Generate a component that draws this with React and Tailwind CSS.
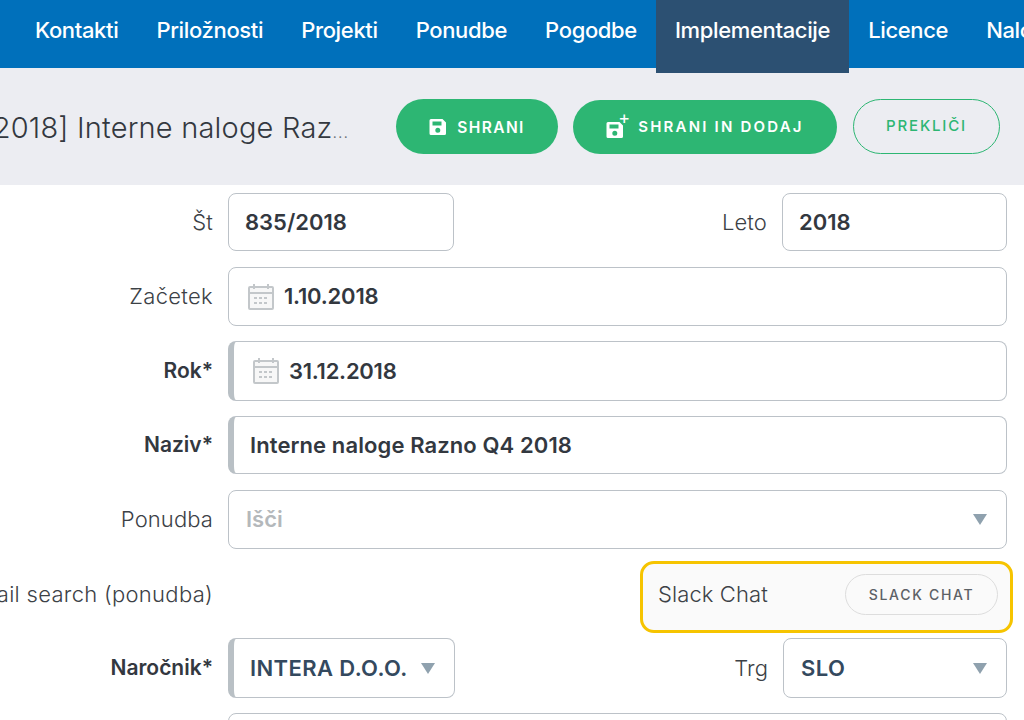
const F = "font-['Inter','Open_Sans',sans-serif]";

function Save({ className }) {
  return (
    <svg viewBox="0 0 18 18" className={className} aria-hidden="true">
      <path fillRule="evenodd" fill="#fff" d="M2 1h11.500L17 4.500V15.500A1.500 1.500 0 0 1 15.500 17H2A1.500 1.500 0 0 1 .5 15.500V2.500A1.500 1.500 0 0 1 2 1ZM3.500 3.500V7.500H12.500V3.500ZM8.800 9.800A2.500 2.500 0 1 0 8.800 14.800A2.500 2.500 0 1 0 8.800 9.800Z" />
    </svg>
  );
}

function Cal() {
  return (
    <svg viewBox="0 0 28 28" className="h-7 w-7 shrink-0" fill="none" stroke="#c3c7ca" strokeWidth="2" aria-hidden="true">
      <rect x="2" y="4" width="24" height="22" rx="1" fill="#f7f7f7" />
      <path d="M2 10H26M7 1V6M21 1V6" />
      <path d="M7 15H21M7 20H21" strokeDasharray="3 2" />
    </svg>
  );
}

function Arrow() {
  return (
    <svg viewBox="0 0 14 11" className="h-[11px] w-[14px] shrink-0" aria-hidden="true">
      <path d="M0 0H14L7 11Z" fill="#8fa1ae" />
    </svg>
  );
}

function Label({ children, strong, className = "" }) {
  return (
    <div className={`flex w-[213px] shrink-0 justify-end whitespace-nowrap ${strong ? "text-[21px] font-semibold text-[#33383f]" : "text-[22px] font-light tracking-[0.1px] text-[#3c4146]"} ${className}`}>
      {children}
    </div>
  );
}

function Box({ children, required, className = "" }) {
  return (
    <div className={`flex h-full items-center rounded-lg border border-[#bcc2c8] bg-white text-[22px] font-semibold text-[#33383f] ${required ? "border-l-[6px] border-l-[#b9c0c5]" : ""} ${className}`}>
      {children}
    </div>
  );
}

export default function App() {
  const nav = ["Kontakti", "Priložnosti", "Projekti", "Ponudbe", "Pogodbe", "Implementacije", "Licence", "Naloge"];
  return (
    <div className={`h-[720px] w-[1024px] overflow-hidden bg-white ${F}`}>
      <nav className="relative z-10 flex h-[68px] items-start whitespace-nowrap bg-[#0070bb] pl-[16px] text-[22px] font-medium tracking-[-0.35px] text-white">
        {nav.map((n) => (
          <div key={n} className={`flex shrink-0 px-[19px] pt-[14px] ${n === "Implementacije" ? "h-[73px] bg-[#2c5072]" : "h-[68px]"}`}>
            {n}
          </div>
        ))}
      </nav>
      <header className="flex h-[117px] items-center justify-end bg-[#ecedf2] pr-[24px]">
        <h1 className="mr-[47px] shrink-0 whitespace-nowrap pt-[2px] text-[29px] font-light tracking-[0.2px] text-[#33383f]">
          [835/2018] Interne naloge Raz<span className="text-[16px] tracking-[1px] text-[#6b7076]">...</span>
        </h1>
        <button className="mr-[15px] flex h-[55px] w-[162px] shrink-0 items-center justify-center gap-[10px] rounded-full bg-[#2db673] text-[15.5px] font-semibold tracking-[1.4px] text-white">
          <Save className="h-[18px] w-[18px]" /><span className="pt-[2px]">SHRANI</span>
        </button>
        <button className="mr-[16px] flex h-[54px] w-[264px] shrink-0 items-center justify-center gap-[8px] rounded-full bg-[#2db673] text-[15px] font-semibold tracking-[2.2px] text-white">
          <span className="relative h-6 w-6">
            <Save className="absolute bottom-0 left-0 h-[18px] w-[18px]" />
            <span className="absolute -right-0.5 -top-1.5 text-[18px] font-normal leading-none">+</span>
          </span>
          <span className="pt-[2px]">SHRANI IN DODAJ</span>
        </button>
        <button className="flex h-[55px] w-[147px] shrink-0 items-center justify-center rounded-full border border-[#2db673] text-[15px] font-medium tracking-[1.8px] text-[#2db673]">PREKLIČI</button>
      </header>

      <main className="flex flex-col pt-2">
        <div className="flex h-[58px] items-center">
          <Label>Št</Label>
          <div className="ml-[15px] h-full w-[226px]"><Box className="pl-[16px]">835/2018</Box></div>
          <div className="flex-1" />
          <span className="text-[22px] font-light tracking-[0.1px] text-[#3c4146]">Leto</span>
          <div className="ml-[15px] mr-[17px] h-full w-[225px]"><Box className="pl-[16px]">2018</Box></div>
        </div>
        <div className="mt-4 flex h-[59px] items-center">
          <Label className="tracking-[0.3px]">Začetek</Label>
          <div className="ml-[15px] mr-[17px] h-full flex-1"><Box className="gap-[9px] pl-[18px] tracking-[-0.2px]"><Cal />1.10.2018</Box></div>
        </div>
        <div className="mt-[15px] flex h-[60px] items-center">
          <Label strong>Rok*</Label>
          <div className="ml-[15px] mr-[17px] h-full flex-1"><Box required className="gap-[9px] pl-[18px] tracking-[-0.25px]"><Cal />31.12.2018</Box></div>
        </div>
        <div className="mt-[15px] flex h-[58px] items-center">
          <Label strong>Naziv*</Label>
          <div className="ml-[15px] mr-[17px] h-full flex-1"><Box required className="pl-[16px] tracking-[0.1px]">Interne naloge Razno Q4 2018</Box></div>
        </div>
        <div className="mt-4 flex h-[59px] items-center">
          <Label>Ponudba</Label>
          <div className="ml-[15px] mr-[17px] h-full flex-1">
            <Box className="justify-between pl-[17px] pr-[19px]"><span className="text-[#b4b8bb]">Išči</span><Arrow /></Box>
          </div>
        </div>
        <div className="mt-3 flex h-[72px] items-center">
          <Label className="pb-[6px] tracking-[0.3px]">Gmail search (ponudba)</Label>
          <div className="flex-1" />
          <div className="mr-[11px] flex h-full w-[373px] items-center justify-between rounded-[14px] border-[3px] border-[#f6c400] bg-[#fafafa] pb-[6px] pl-[15px] pr-[12px] text-[22px] font-light tracking-[0.1px] text-[#3c4146]">
            Slack Chat
            <button className="flex h-[41px] w-[153px] items-center justify-center rounded-full border border-[#dddddd] text-[14px] font-medium tracking-[1.7px] text-[#5c6166]">SLACK CHAT</button>
          </div>
        </div>
        <div className="mt-[5px] flex h-[60px] items-center">
          <Label strong>Naročnik*</Label>
          <div className="ml-[15px] h-full w-[227px]">
            <Box required className="justify-between pl-[16px] pr-[19px] tracking-[0.4px] text-[#34495e]">INTERA D.O.O.<Arrow /></Box>
          </div>
          <div className="flex-1" />
          <span className="text-[22px] font-light tracking-[0.1px] text-[#3c4146]">Trg</span>
          <div className="ml-[15px] mr-[17px] h-full w-[224px]">
            <Box className="justify-between pl-[17px] pr-[19px] tracking-[0.4px] text-[#34495e]">SLO<Arrow /></Box>
          </div>
        </div>
        <div className="mt-[15px] ml-[228px] mr-[17px] h-[60px] rounded-lg border border-[#bcc2c8]" />
      </main>
    </div>
  );
}
